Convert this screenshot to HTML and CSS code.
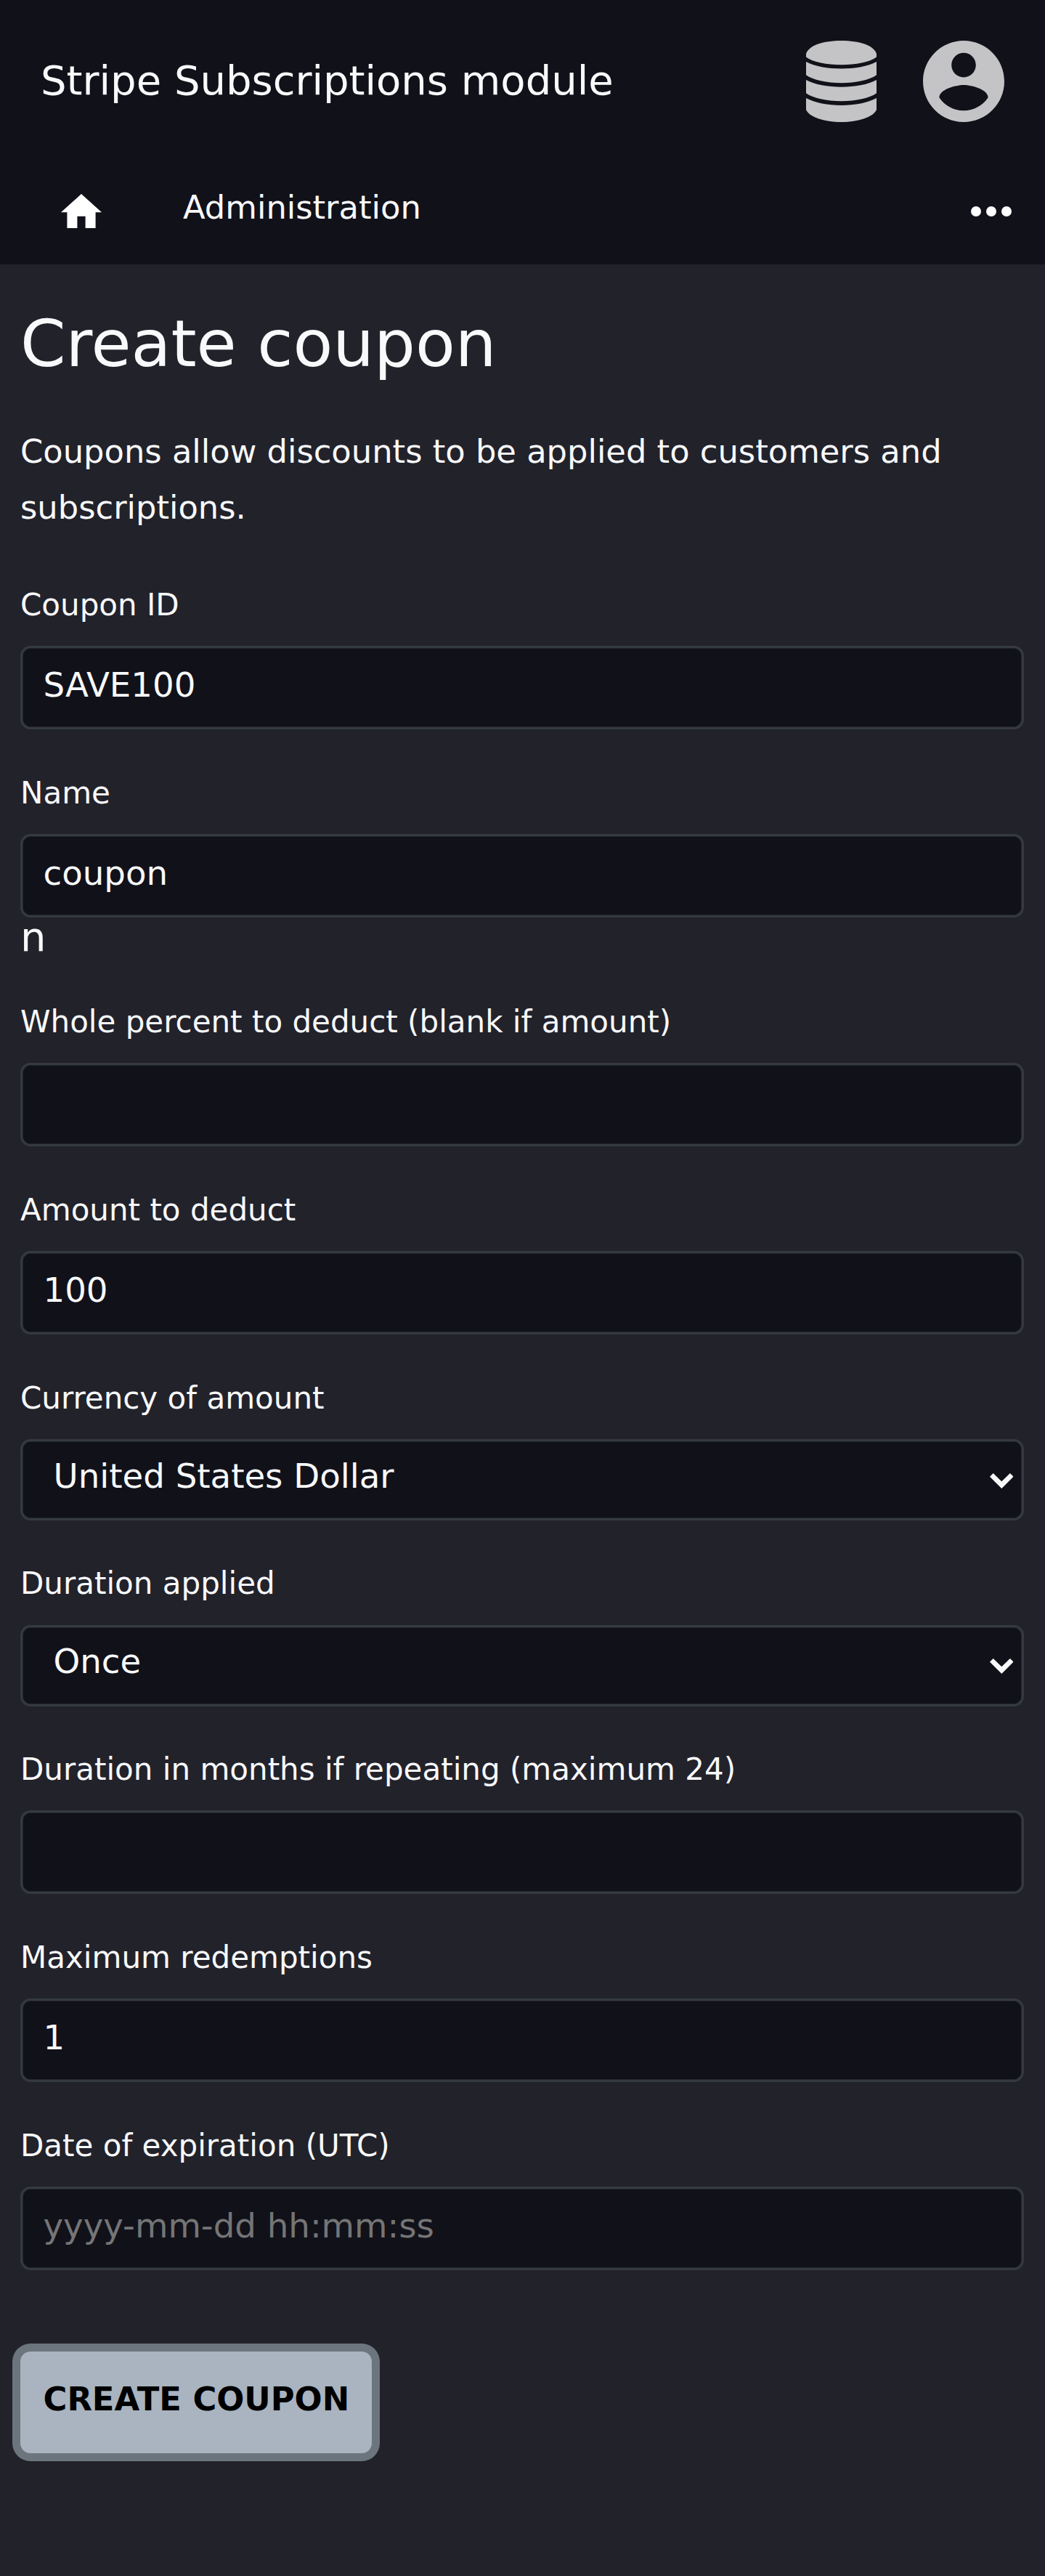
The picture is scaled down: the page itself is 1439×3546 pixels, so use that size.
FILE: index.html
```html
<!DOCTYPE html>
<html lang="en">
<head>
<meta charset="utf-8">
<title>Create coupon</title>
<link rel="stylesheet" href="styles.css">
</head>
<body>
<header class="header">
  <div class="topbar">
    <span class="brand">Stripe Subscriptions module</span>
    <div class="account-icons">
      <svg class="icon-database" viewBox="0 0 97 112" aria-hidden="true">
        <path d="M0 18C4 6 24 0 48.500 0S93 6 97 18V22.500C88 29.500 68 33.300 48.500 33.300S9 29.500 0 22.500Z"/>
        <path d="M0 29C12 35.500 30 38.500 48.500 38.500S85 35.500 97 29V47.300C88 54 68 58.200 48.500 58.200S9 54 0 47.300Z"/>
        <path d="M0 54C12 60.500 30 63.700 48.500 63.700S85 60.500 97 54V72.300C88 79 68 83.200 48.500 83.200S9 79 0 72.300Z"/>
        <path d="M0 79C12 85.500 30 88.900 48.500 88.900S85 85.500 97 79V95C93 105 72 112 48.500 112S4 105 0 95Z"/>
      </svg>
      <svg class="icon-user" viewBox="2 2 20 20" aria-hidden="true">
        <path d="M12 2C6.480 2 2 6.480 2 12s4.480 10 10 10 10-4.480 10-10S17.520 2 12 2zm0 3c1.660 0 3 1.340 3 3s-1.340 3-3 3-3-1.340-3-3 1.340-3 3-3zm0 14.200c-2.500 0-4.710-1.280-6-3.220.030-1.990 4-3.080 6-3.080 1.990 0 5.970 1.090 6 3.080-1.290 1.940-3.500 3.220-6 3.220z"/>
      </svg>
    </div>
  </div>
  <nav class="nav">
    <svg class="icon-home" viewBox="2 3 20 17" aria-hidden="true"><path d="M10 20v-6h4v6h5v-8h3L12 3 2 12h3v8z"/></svg>
    <span class="nav-link">Administration</span>
    <svg class="icon-more" viewBox="0 0 56 14" aria-hidden="true"><circle cx="7" cy="7" r="7"/><circle cx="28" cy="7" r="7"/><circle cx="49" cy="7" r="7"/></svg>
  </nav>
</header>
<main class="content">
  <h1 class="title">Create coupon</h1>
  <p class="intro">Coupons allow discounts to be applied to customers and subscriptions.</p>
  <form class="form">
    <div class="field">
      <label class="label" for="couponid">Coupon ID</label>
      <input class="control" id="couponid" type="text" value="SAVE100">
    </div>
    <div class="field">
      <label class="label" for="name">Name</label>
      <input class="control" id="name" type="text" value="coupon">
      <span class="stray">n</span>
    </div>
    <div class="field">
      <label class="label" for="percent">Whole percent to deduct (blank if amount)</label>
      <input class="control" id="percent" type="text">
    </div>
    <div class="field">
      <label class="label" for="amount">Amount to deduct</label>
      <input class="control" id="amount" type="text" value="100">
    </div>
    <div class="field">
      <label class="label" for="currency">Currency of amount</label>
      <div class="select-wrap">
        <select class="control select" id="currency"><option>United States Dollar</option></select>
        <svg class="chevron" viewBox="0 0 32.600 21" aria-hidden="true"><path d="M0 4.700L4.700 0 16.300 11.300 27.900 0 32.600 4.700 16.300 21z"/></svg>
      </div>
    </div>
    <div class="field">
      <label class="label" for="duration">Duration applied</label>
      <div class="select-wrap">
        <select class="control select" id="duration"><option>Once</option></select>
        <svg class="chevron" viewBox="0 0 32.600 21" aria-hidden="true"><path d="M0 4.700L4.700 0 16.300 11.300 27.900 0 32.600 4.700 16.300 21z"/></svg>
      </div>
    </div>
    <div class="field">
      <label class="label" for="months">Duration in months if repeating (maximum 24)</label>
      <input class="control" id="months" type="text">
    </div>
    <div class="field">
      <label class="label" for="redemptions">Maximum redemptions</label>
      <input class="control" id="redemptions" type="text" value="1">
    </div>
    <div class="field">
      <label class="label" for="expires">Date of expiration (UTC)</label>
      <input class="control" id="expires" type="text" placeholder="yyyy-mm-dd hh:mm:ss">
    </div>
    <button class="submit" type="button">CREATE COUPON</button>
  </form>
</main>
</body>
</html>
```
FILE: styles.css
```css
* {
  box-sizing: border-box;
}

body {
  margin: 0;
  min-height: 3546px;
  background: #22222b;
  color: #f8f9fa;
  font-family: "DejaVu Sans", sans-serif;
  font-size: 56px;
}

.header {
  height: 364px;
  background: #11111a;
}

.topbar {
  display: flex;
  justify-content: space-between;
  height: 224px;
  padding: 56px 56px 0;
}

.brand {
  line-height: 110px;
}

.account-icons {
  display: flex;
  gap: 64px;
  fill: #c4c4c6;
}

.icon-database {
  width: 97px;
  height: 112px;
}

.icon-user {
  width: 112px;
  height: 112px;
}

.nav {
  display: flex;
  align-items: flex-start;
  padding: 0 46px 0 84px;
  fill: #fff;
}

.icon-home {
  width: 56px;
  height: 47.6px;
  margin: 42.7px 112px 0 0;
}

.nav-link {
  margin-top: 35.5px;
  font-size: 44.8px;
  line-height: 52px;
}

.icon-more {
  width: 56px;
  height: 14px;
  margin: 59.5px 0 0 auto;
}

.content {
  padding: 56.5px 29px 0 28px;
}

.title {
  margin: 0 0 57.5px;
  font-size: 89.6px;
  font-weight: 400;
  line-height: 105px;
}

.intro {
  margin: 0;
  font-size: 44.8px;
  line-height: 77px;
}

.form {
  padding-top: 8.5px;
}

.field {
  padding-top: 59px;
}

.label {
  display: block;
  margin-bottom: 28.5px;
  font-size: 42px;
  line-height: 56px;
}

.control {
  display: block;
  width: 100%;
  height: 115px;
  margin: 0 0 0.5px;
  padding: 24px 28.5px 31.5px;
  border: 3px solid #343a40;
  border-radius: 14px;
  outline: 0;
  background: #11111a;
  box-shadow: inset 0 0 0 0.6px #343a40;
  color: #f8f9fa;
  font-family: inherit;
  font-size: 46.667px;
}

.control::placeholder {
  color: #757575;
}

.select-wrap {
  position: relative;
}

.select {
  height: 112px;
  margin: 0;
  padding: 20px 42.5px 31px;
  appearance: none;
}

.chevron {
  position: absolute;
  top: 46.7px;
  right: 14.7px;
  width: 32.6px;
  height: 21px;
  fill: #f8f9fa;
}

.stray {
  display: block;
  height: 56px;
  line-height: 52px;
}

.submit {
  display: block;
  width: 483.5px;
  height: 140px;
  margin-top: 112px;
  padding: 0 0 10px 31.5px;
  border: 0;
  border-radius: 14px;
  background: #a9b4c0;
  box-shadow: 0 0 0 11px #6c757d;
  color: #000;
  font-family: inherit;
  font-size: 44.8px;
  font-weight: 700;
  text-align: left;
}
```
